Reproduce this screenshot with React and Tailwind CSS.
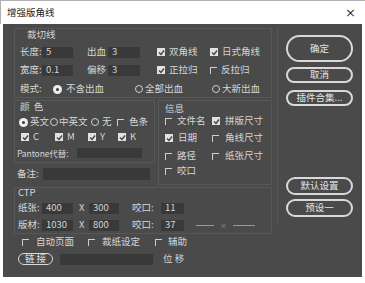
import React from "react";

const T = "text-[#d6d6d6]";

function Input({ v = "", w, h = 11, cls = "" }) {
  return (
    <div
      className={`bg-[#393939] text-[#d6d6d6] text-[9.5px] leading-none flex items-center pl-[4px] ${cls}`}
      style={{ width: w, height: h }}
    >
      {v}
    </div>
  );
}

function Box({ checked }) {
  if (checked)
    return (
      <span className="w-[8px] h-[8px] bg-[#e2e2e2] flex items-center justify-center shrink-0">
        <svg width="7" height="7" viewBox="0 0 7 7">
          <path d="M1 3.5 L3 5.5 L6 1.5" stroke="#444" strokeWidth="1.4" fill="none" />
        </svg>
      </span>
    );
  return <span className="w-[7px] h-[7px] border-t border-l border-[#cfcfcf] shrink-0" />;
}

function Radio({ on }) {
  if (on)
    return (
      <span className="w-[9px] h-[9px] rounded-full bg-[#eeeeee] flex items-center justify-center shrink-0">
        <span className="w-[3px] h-[3px] rounded-full bg-[#3a3a3a]" />
      </span>
    );
  return <span className="w-[8px] h-[8px] rounded-full border border-[#cfcfcf] shrink-0" />;
}

function Chk({ checked, label, gap = 4, w }) {
  return (
    <span className="flex items-center shrink-0 whitespace-nowrap" style={{ width: w }}>
      <Box checked={checked} />
      <span className={`${T}`} style={{ marginLeft: gap }}>{label}</span>
    </span>
  );
}

function Btn({ label, h }) {
  return (
    <div
      className="w-[67px] border-2 border-[#d9d9d9] rounded-full flex items-center justify-center text-[#e4e4e4] text-[9.5px] leading-none"
      style={{ height: h }}
    >
      {label}
    </div>
  );
}

export default function App() {
  return (
    <div className="w-[365px] h-[283px] bg-white overflow-hidden font-['Noto_Sans_CJK_SC','Noto_Sans',sans-serif] text-[9.5px] leading-none whitespace-nowrap">
      {/* title bar */}
      <div className="h-[24px] flex items-center justify-between border-l border-t border-[#b0b0b0] pl-[6px] pr-[9px]">
        <span className="text-[9.5px] text-[#222]">增强版角线</span>
        <span className="text-[13px] text-[#333] font-['DejaVu_Sans',sans-serif]">×</span>
      </div>
      {/* body */}
      <div className="ml-[3px] w-[359px] h-[253px] bg-[#4a4a4a] flex">
        {/* left column */}
        <div className="w-[274px] flex flex-col">
          {/* 裁切线 group */}
          <div className="mt-[4px] ml-[11px] w-[258px] h-[70px] border border-[#575757] flex flex-col">
            <div className={`h-[12px] pl-[12px] flex items-center ${T}`}>裁切线</div>
            <div className="mt-[5px] h-[12px] flex items-center pl-[5px]">
              <span className={`w-[22px] ${T}`}>长度:</span>
              <Input v="5" w={31} />
              <span className={`ml-[14px] w-[21px] ${T}`}>出血</span>
              <Input v="3" w={32} />
              <span className="ml-[17px]"><Chk checked label="双角线" w={53} /></span>
              <Chk checked label="日式角线" />
            </div>
            <div className="mt-[6px] h-[12px] flex items-center pl-[5px]">
              <span className={`w-[22px] ${T}`}>宽度:</span>
              <Input v="0.1" w={31} />
              <span className={`ml-[14px] w-[21px] ${T}`}>偏移</span>
              <Input v="3" w={32} />
              <span className="ml-[17px]"><Chk checked label="正拉归" w={53} /></span>
              <Chk label="反拉归" />
            </div>
            <div className="mt-[7px] h-[12px] flex items-center pl-[5px]">
              <span className={`w-[33px] ${T}`}>模式:</span>
              <span className="flex items-center w-[82px]">
                <Radio on />
                <span className={`ml-[4px] ${T}`}>不含出血</span>
              </span>
              <span className="flex items-center w-[77px]">
                <Radio />
                <span className={`ml-[2px] ${T}`}>全部出血</span>
              </span>
              <span className="flex items-center">
                <Radio />
                <span className={`ml-[2px] ${T}`}>大新出血</span>
              </span>
            </div>
          </div>

          {/* middle: 颜色 + 信息 */}
          <div className="mt-[2px] flex">
            <div className="flex flex-col">
              <div className="ml-[11px] w-[141px] h-[63px] border border-[#575757] flex flex-col">
                <div className={`h-[12px] pl-[5px] flex items-center ${T}`}>颜&nbsp;&nbsp;色</div>
                <div className="mt-[3px] h-[12px] flex items-center pl-[4px]">
                  <span className="flex items-center w-[31px]">
                    <Radio on />
                    <span className={`ml-[2px] ${T}`}>英文</span>
                  </span>
                  <span className="flex items-center w-[41px]">
                    <Radio />
                    <span className={`ml-[1px] ${T}`}>中英文</span>
                  </span>
                  <span className="flex items-center w-[26px]">
                    <Radio />
                    <span className={`ml-[3px] ${T}`}>无</span>
                  </span>
                  <Chk label="色条" gap={5} />
                </div>
                <div className="mt-[3px] h-[12px] flex items-center pl-[6px]">
                  <Chk checked label="C" w={34} />
                  <Chk checked label="M" w={33} />
                  <Chk checked label="Y" w={30} />
                  <Chk checked label="K" />
                </div>
                <div className="mt-[4px] h-[12px] flex items-center pl-[2px]">
                  <span className={`w-[60px] text-[8.5px] tracking-[-0.1px] ${T}`}>Pantone代替:</span>
                  <Input w={65} h={10} />
                </div>
              </div>
              <div className="mt-[5px] h-[12px] flex items-center pl-[14px]">
                <span className={`w-[26px] ${T}`}>备注:</span>
                <Input w={107} h={12} />
              </div>
            </div>
            {/* 信息 */}
            <div className="ml-[3px] w-[114px] h-[85px] border border-[#575757] flex flex-col">
              <div className={`h-[12px] pl-[6px] mt-[2px] flex items-center ${T}`}>信息</div>
              <div className="mt-[0px] h-[12px] flex items-center pl-[6px]">
                <Chk label="文件名" gap={5} w={47} />
                <Chk checked label="拼版尺寸" gap={5} />
              </div>
              <div className="mt-[5px] h-[12px] flex items-center pl-[6px]">
                <Chk checked label="日期" gap={5} w={47} />
                <Chk label="角线尺寸" gap={6} />
              </div>
              <div className="mt-[6px] h-[12px] flex items-center pl-[6px]">
                <Chk label="路径" gap={5} w={47} />
                <Chk label="纸张尺寸" gap={6} />
              </div>
              <div className="mt-[3px] h-[12px] flex items-center pl-[6px]">
                <Chk label="咬口" gap={5} />
              </div>
            </div>
          </div>

          {/* CTP */}
          <div className="mt-[2px] ml-[11px] w-[258px] h-[47px] border border-[#575757] flex flex-col">
            <div className={`h-[10px] pl-[3px] flex items-center ${T}`}>CTP</div>
            <div className="mt-[4px] h-[12px] flex items-center pl-[3px]">
              <span className={`w-[24px] ${T}`}>纸张:</span>
              <Input v="400" w={31} />
              <span className={`ml-[6px] w-[10px] ${T}`}>X</span>
              <Input v="300" w={30} />
              <span className={`ml-[13px] w-[29px] ${T}`}>咬口:</span>
              <Input v="11" w={23} />
            </div>
            <div className="mt-[5px] h-[12px] flex items-center pl-[3px]">
              <span className={`w-[24px] ${T}`}>版材:</span>
              <Input v="1030" w={31} />
              <span className={`ml-[6px] w-[10px] ${T}`}>X</span>
              <Input v="800" w={30} />
              <span className={`ml-[13px] w-[29px] ${T}`}>咬口:</span>
              <Input v="37" w={23} />
              <span className="ml-[12px] flex items-center">
                <span className="w-[18px] h-[1px] bg-[#9a9a9a]" />
                <span className="ml-[6px] text-[7px] text-[#999]">×</span>
                <span className="ml-[6px] w-[22px] h-[1px] bg-[#9a9a9a]" />
              </span>
            </div>
          </div>

          <div className="mt-[2px] h-[12px] flex items-center pl-[19px]">
            <Chk label="自动页面" gap={7} w={66} />
            <Chk label="裁纸设定" gap={7} w={67} />
            <Chk label="辅助" gap={6} />
          </div>
          <div className="mt-[5px] h-[12px] flex items-center pl-[15px]">
            <span className="w-[35px] h-[12px] border border-[#d9d9d9] rounded-full flex items-center justify-center text-[#e0e0e0]">链&nbsp;接</span>
            <span className="ml-[7px]"><Input w={93} h={11} /></span>
            <span className={`ml-[10px] ${T}`}>位&nbsp;移</span>
          </div>
        </div>

        {/* right pane */}
        <div className="flex flex-col">
          <div className="mt-[4px] h-[196px] border-l border-[#575757] pl-[8px] flex flex-col">
            <div className="mt-[7px]"><Btn label="确定" h={27} /></div>
            <div className="mt-[5px]"><Btn label="取消" h={16} /></div>
            <div className="mt-[7px]"><Btn label="插件合集..." h={16} /></div>
            <div className="mt-[71px]"><Btn label="默认设置" h={18} /></div>
            <div className="mt-[4px]"><Btn label="预设一" h={18} /></div>
          </div>
        </div>
      </div>
    </div>
  );
}
